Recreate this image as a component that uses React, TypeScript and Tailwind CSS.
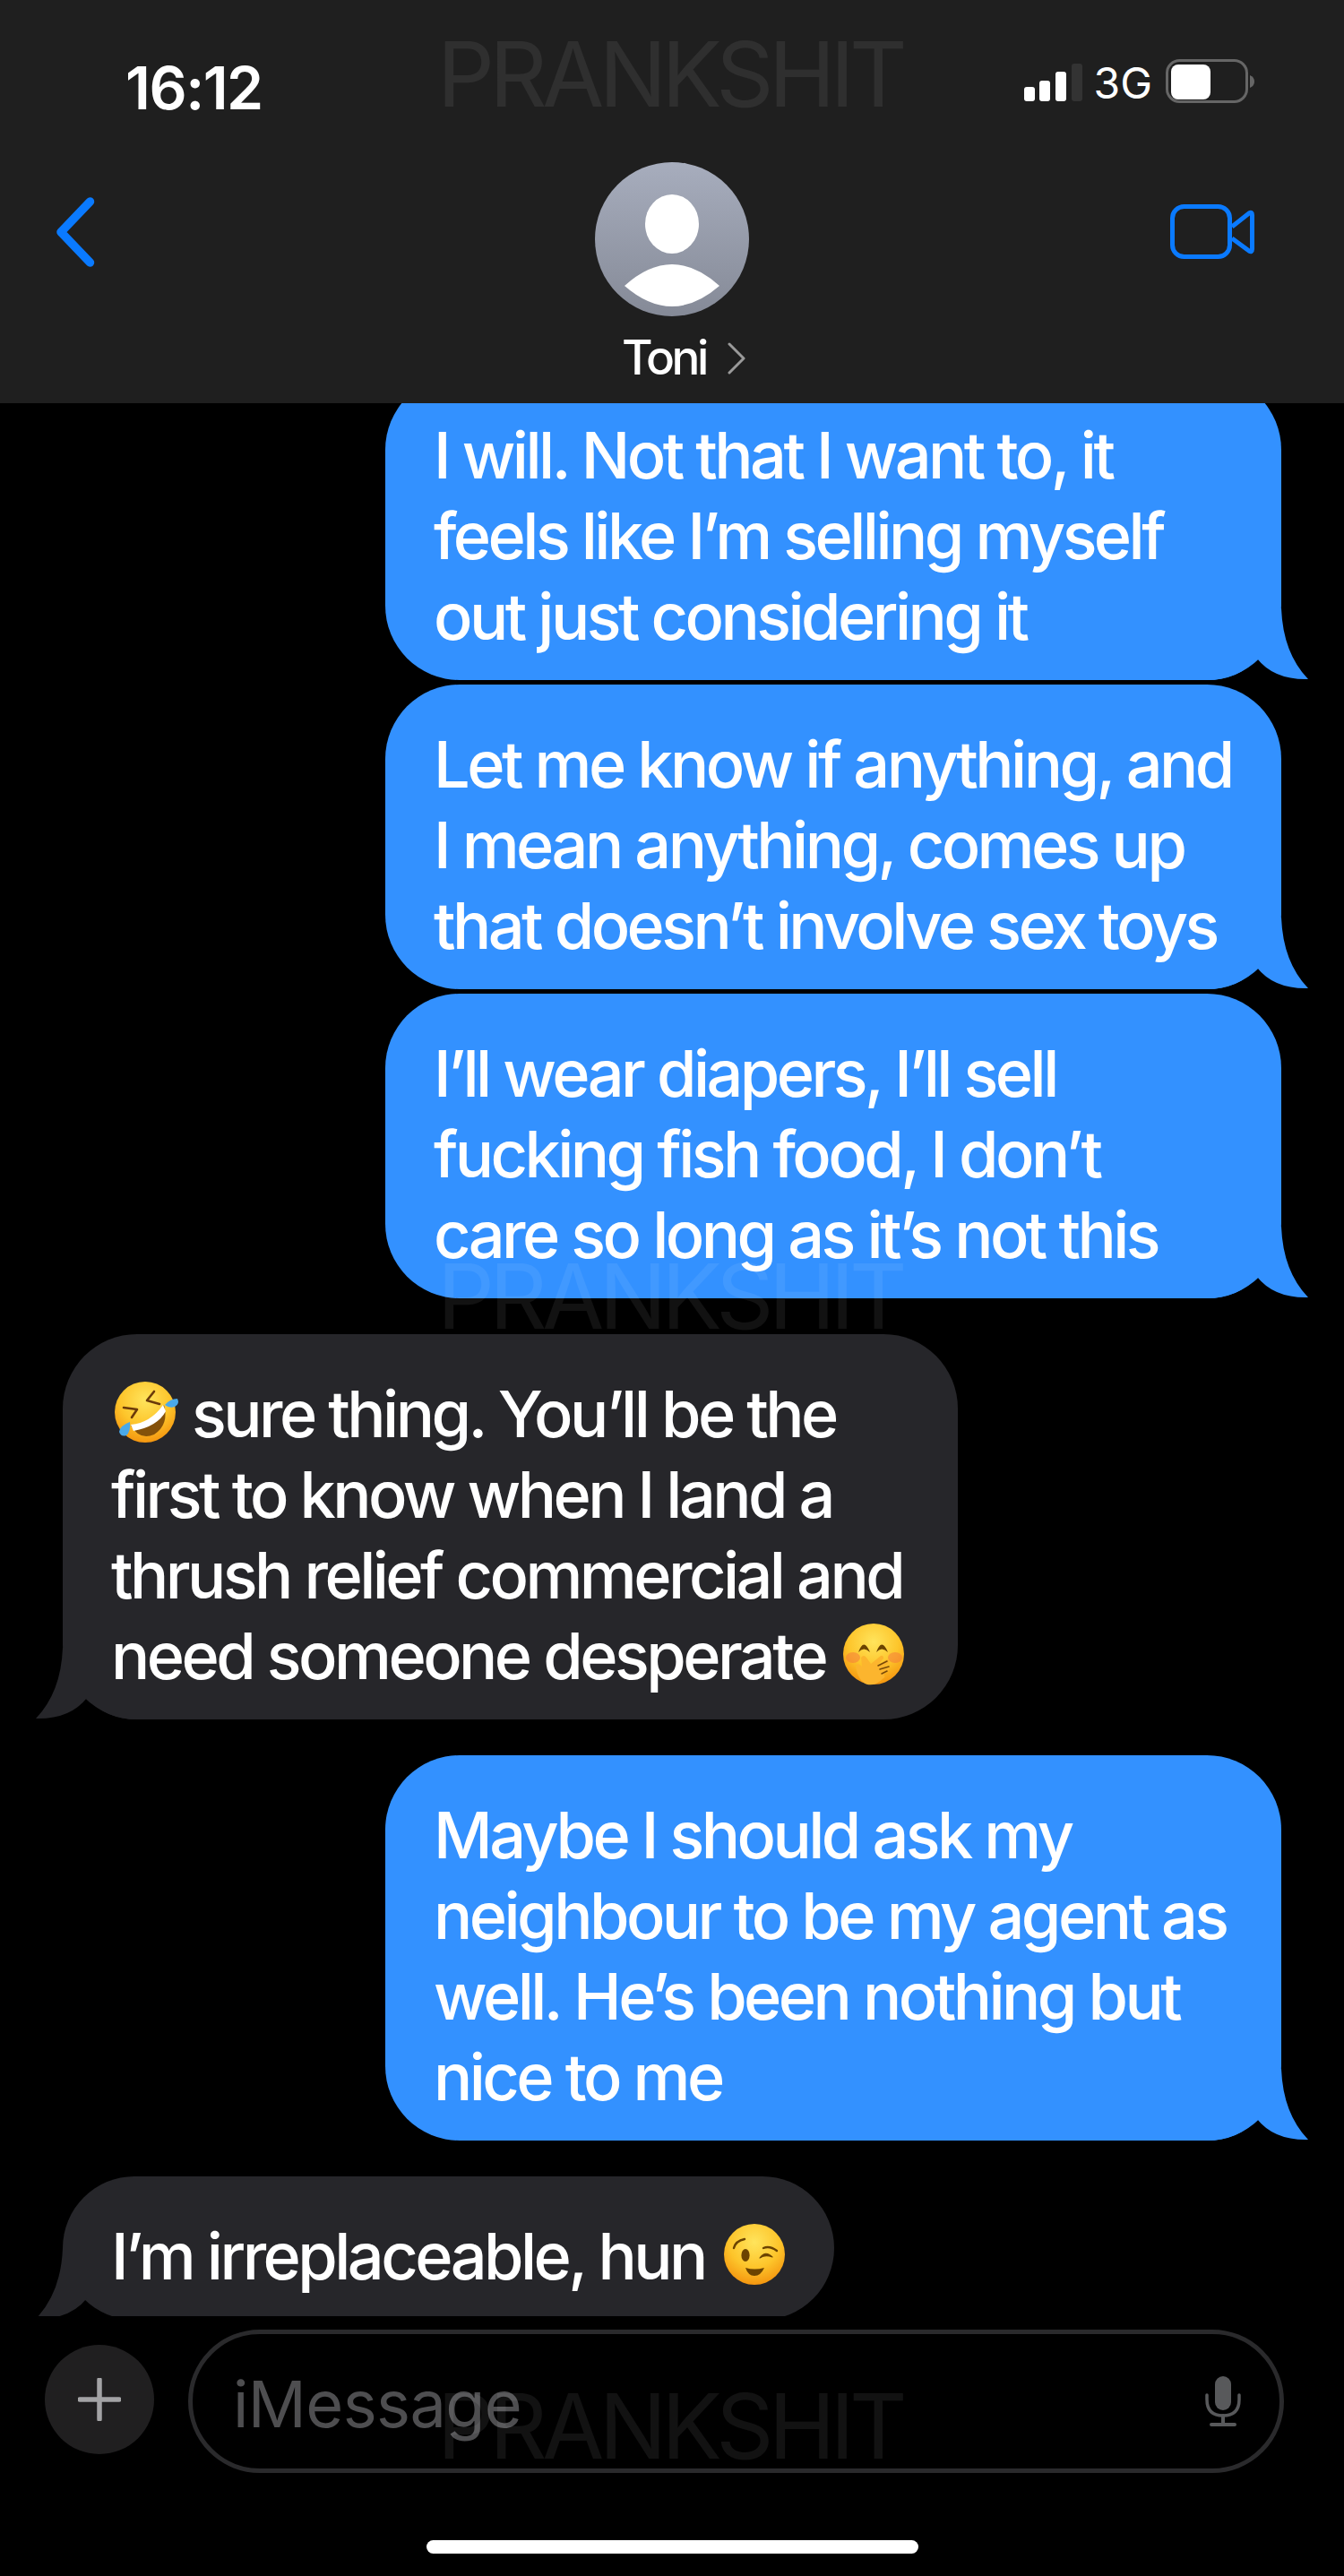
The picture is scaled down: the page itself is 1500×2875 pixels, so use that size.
import React from "react";

const font = { fontFamily: "Inter, 'Noto Sans', sans-serif" };

function Tail({ side, color }: { side: "left" | "right"; color: string }) {
  const cls =
    side === "right"
      ? "absolute bottom-0 right-[-30px] w-[120px] h-[80px]"
      : "absolute bottom-0 left-[-30px] w-[120px] h-[80px] -scale-x-100";
  return (
    <svg viewBox="0 0 120 80" className={cls}>
      <path d="M0 80 L7 80 Q42 80 63 56 Q82 80 120 79 Q92 50 90 0 L0 0Z" fill={color} />
    </svg>
  );
}

function Bubble({ side, width, lines }: { side: "left" | "right"; width: string; lines: React.ReactNode[] }) {
  const right = side === "right";
  return (
    <div
      className={
        right
          ? `relative self-end mr-[70px] ${width} rounded-[83px] bg-[#3391ff] pl-[54px] pt-[44px] pb-[26px] text-white`
          : `relative self-start ml-[70px] ${width} rounded-[83px] bg-[#26262a] pl-[54px] pt-[44px] pb-[26px] text-white`
      }
    >
      <Tail side={side} color={right ? "#3391ff" : "#26262a"} />
      <div className="relative">
        {lines.map((l, i) => (
          <div key={i} className="text-[72px] font-[450] leading-[90px] tracking-[-3.55px] whitespace-nowrap">
            {l}
          </div>
        ))}
      </div>
    </div>
  );
}

function FaceDefs({ id }: { id: string }) {
  return (
    <defs>
      <radialGradient id={id} cx="50%" cy="30%" r="75%">
        <stop offset="0%" stopColor="#ffe45c" />
        <stop offset="55%" stopColor="#fdc52b" />
        <stop offset="90%" stopColor="#f59a12" />
        <stop offset="100%" stopColor="#ee8a0c" />
      </radialGradient>
    </defs>
  );
}

function Rofl() {
  return (
    <svg viewBox="16 10 76 72" className="inline-block w-[76px] h-[72px] ml-[2px] mr-[12px] align-[-8px]">
      <FaceDefs id="rofl" />
      <circle cx="52" cy="46" r="34" fill="url(#rofl)" />
      <path d="M28 41 L43 43 L37 52" fill="none" stroke="#6b3a0a" strokeWidth="2.6" strokeLinejoin="round" strokeLinecap="round" />
      <path d="M62 23 L54 33 L68 37" fill="none" stroke="#6b3a0a" strokeWidth="2.6" strokeLinejoin="round" strokeLinecap="round" />
      <path d="M36 61 Q60 59 73 38 Q79 60 62 71 Q46 78 36 61Z" fill="#84510a" />
      <path d="M36 60 Q58 58 72 38 L75 45 Q66 62 39 67Z" fill="#ffffff" />
      <path d="M74 38 Q80 31 88 31 Q91 37 85 40 Q79 42 74 38Z" fill="#4aa9e9" />
      <path d="M35 57 Q24 61 23 68 Q25 74 31 72 Q36 68 35 57Z" fill="#4aa9e9" />
    </svg>
  );
}

function HandFace() {
  return (
    <svg viewBox="12 10 72 72" className="inline-block w-[72px] h-[72px] ml-[18px] align-[-8px]">
      <FaceDefs id="hand" />
      <circle cx="48" cy="46" r="34" fill="url(#hand)" />
      <ellipse cx="25" cy="50" rx="8" ry="6" fill="#f47c3c" opacity="0.55" />
      <ellipse cx="72" cy="50" rx="8" ry="6" fill="#f47c3c" opacity="0.55" />
      <path d="M31 44 Q37 27 44 44 Q37 37 31 44Z" fill="#6b4300" />
      <path d="M51 44 Q57 27 64 44 Q57 37 51 44Z" fill="#6b4300" />
      <path
        d="M34 50 Q37 46 40 50 L45 57 L56 48 Q59 47 59 51 L53 58 L63 52 Q66 52 65 56 L57 63 L64 60 Q67 61 65 64 L59 69 Q62 71 59 73 Q50 82 41 80 Q34 78 30 68 L28 60 Q29 56 32 58 L35 60Z"
        fill="#fcb52e"
      />
      <path d="M53 59 L63 54 M55 63 L65 60 M57 68 L63 65" stroke="#7a4a08" strokeWidth="1.6" strokeLinecap="round" fill="none" />
    </svg>
  );
}

function Wink() {
  return (
    <svg viewBox="12 10 72 72" className="inline-block w-[72px] h-[72px] ml-[19px] align-[-8px]">
      <FaceDefs id="wink" />
      <circle cx="48" cy="46" r="34" fill="url(#wink)" />
      <path d="M25 39 Q27 31 37 29" fill="none" stroke="#6b4300" strokeWidth="2.4" strokeLinecap="round" />
      <ellipse cx="38" cy="47" rx="4.6" ry="7" fill="#6b4300" />
      <path d="M58 39 Q65 36 73 42" fill="none" stroke="#6b4300" strokeWidth="2.4" strokeLinecap="round" />
      <path d="M54 50 Q60 41 68 49 Q60 46 54 50Z" fill="#6b4300" stroke="#6b4300" strokeWidth="1.2" strokeLinejoin="round" />
      <path d="M38 61 Q48 64 59 61 Q55 70 48 70 Q41 70 38 61Z" fill="#6b4300" />
    </svg>
  );
}

function Watermark({ top }: { top: string }) {
  return (
    <div
      className={`absolute left-[488px] ${top} text-[100px] leading-none tracking-[-5.5px] text-white/[0.07] whitespace-nowrap pointer-events-none`}
    >
      PRANKSHIT
    </div>
  );
}

export default function App() {
  return (
    <div className="relative w-[1500px] h-[2875px] bg-black overflow-hidden flex flex-col" style={font}>
      <header className="h-[450px] shrink-0 bg-[#1f1f1f] flex flex-col">
        <div className="h-[181px] flex items-center pl-[140px] pr-[100px] text-white">
          <span className="mt-[14px] text-[66px] leading-none font-semibold tracking-[-1.5px]">16:12</span>
          <div className="ml-auto flex items-center">
            <svg viewBox="0 0 65 42" className="w-[65px] h-[42px] mt-[3px]">
              <rect x="0" y="26" width="12" height="16" rx="3" fill="#fff" />
              <rect x="17" y="19" width="12" height="23" rx="3" fill="#fff" />
              <rect x="35" y="9" width="12" height="33" rx="3" fill="#fff" />
              <rect x="53" y="0" width="12" height="42" rx="3" fill="#333333" />
            </svg>
            <span className="ml-[13px] text-[48px] leading-none tracking-[0px] mt-[5px]">3G</span>
            <svg viewBox="0 0 99 49" className="ml-[15px] w-[99px] h-[49px]">
              <rect x="1.5" y="1.5" width="89" height="46" rx="14" fill="none" stroke="#666666" strokeWidth="3" />
              <rect x="6" y="6" width="44" height="39" rx="8" fill="#fff" />
              <path d="M94 18 Q99 20 99 25 Q99 30 94 32Z" fill="#666666" />
            </svg>
          </div>
        </div>
        <div className="grid grid-cols-[1fr_172px_1fr]">
          <div className="pl-[62px] pt-[39px]">
            <svg viewBox="0 0 44 78" className="w-[44px] h-[78px]">
              <path d="M38.500 5 L6 39 L38.500 73" fill="none" stroke="#0a7aff" strokeWidth="9.500" strokeLinecap="round" strokeLinejoin="round" />
            </svg>
          </div>
          <div className="flex flex-col items-center">
            <svg viewBox="0 0 172 172" className="w-[172px] h-[172px]">
              <defs>
                <linearGradient id="av" x1="0" y1="0" x2="0" y2="1">
                  <stop offset="0%" stopColor="#a7adbd" />
                  <stop offset="100%" stopColor="#858a97" />
                </linearGradient>
              </defs>
              <circle cx="86" cy="86" r="86" fill="url(#av)" />
              <ellipse cx="86" cy="69" rx="30" ry="33" fill="#fff" />
              <path d="M33 138 Q86 90 139 138 Q86 184 33 138Z" fill="#fff" />
            </svg>
            <div className="mt-[14px] ml-[26px] flex items-center text-white whitespace-nowrap">
              <span className="text-[53px] font-[450] leading-[64px] tracking-[-3.4px]">Toni</span>
              <svg viewBox="0 0 20 36" className="ml-[24px] w-[20px] h-[36px] mt-[2px]">
                <path d="M2 2 L18 18 L2 34" fill="none" stroke="#9a9a9a" strokeWidth="3" strokeLinecap="round" strokeLinejoin="round" />
              </svg>
            </div>
          </div>
          <div className="flex justify-end pr-[100px] pt-[47px]">
            <svg viewBox="0 0 94 61" className="w-[94px] h-[61px]">
              <rect x="2.5" y="2.5" width="64" height="56" rx="13" fill="none" stroke="#0a7aff" strokeWidth="5" />
              <path d="M69 25 L88 10 Q91.500 8 91.500 12 L91.500 50 Q91.500 54 88 52 L69 38" fill="none" stroke="#0a7aff" strokeWidth="5" strokeLinejoin="round" />
            </svg>
          </div>
        </div>
      </header>

      <main className="h-[2135px] shrink-0 overflow-hidden flex flex-col">
        <div className="-mt-[31px] flex flex-col">
          <Bubble side="right" width="w-[1000px]" lines={["I will. Not that I want to, it", "feels like I’m selling myself", "out just considering it"]} />
          <div className="mt-[5px] flex flex-col">
            <Bubble side="right" width="w-[1000px]" lines={["Let me know if anything, and", "I mean anything, comes up", "that doesn’t involve sex toys"]} />
          </div>
          <div className="mt-[5px] flex flex-col">
            <Bubble side="right" width="w-[1000px]" lines={["I’ll wear diapers, I’ll sell", "fucking fish food, I don’t", "care so long as it’s not this"]} />
          </div>
          <div className="mt-[40px] flex flex-col">
            <Bubble
              side="left"
              width="w-[999px]"
              lines={[
                <>
                  <Rofl />
                  sure thing. You’ll be the
                </>,
                "first to know when I land a",
                "thrush relief commercial and",
                <>
                  need someone desperate
                  <HandFace />
                </>,
              ]}
            />
          </div>
          <div className="mt-[40px] flex flex-col">
            <Bubble side="right" width="w-[1000px]" lines={["Maybe I should ask my", "neighbour to be my agent as", "well. He’s been nothing but", "nice to me"]} />
          </div>
          <div className="mt-[40px] flex flex-col">
            <Bubble
              side="left"
              width="w-[861px]"
              lines={[
                <>
                  I’m irreplaceable, hun
                  <Wink />
                </>,
              ]}
            />
          </div>
        </div>
      </main>

      <footer className="flex-1 flex flex-col pt-[15px]">
        <div className="flex items-center pl-[50px] gap-[38px]">
          <div className="w-[122px] h-[122px] rounded-full bg-[#201f20] flex items-center justify-center -mt-[4px]">
            <svg viewBox="0 0 48 48" className="w-[48px] h-[48px]">
              <path d="M24 2 V46 M2 24 H46" stroke="#a3a3a5" strokeWidth="5.500" strokeLinecap="round" fill="none" />
            </svg>
          </div>
          <div className="w-[1223px] h-[160px] rounded-[80px] border-[5px] border-[#2a2a2c] flex items-center pl-[45px] pr-[43px]">
            <span className="text-[72px] leading-[90px] tracking-[-0.6px] text-[#4e4e50] mt-[6px]">iMessage</span>
            <svg viewBox="0 0 40 56" className="ml-auto w-[40px] h-[56px]">
              <rect x="11" y="0" width="18" height="38" rx="9" fill="#58595b" />
              <path d="M2 21 V26 Q2 44 20 44 Q38 44 38 26 V21" fill="none" stroke="#58595b" strokeWidth="3.500" strokeLinecap="round" />
              <path d="M20 44 V53 M7 54 H33" stroke="#58595b" strokeWidth="4" strokeLinecap="round" fill="none" />
            </svg>
          </div>
        </div>
        <div className="mt-[75px] ml-[476px] w-[549px] h-[15px] rounded-full bg-white" />
      </footer>

      <Watermark top="top-[33px]" />
      <Watermark top="top-[1397px]" />
      <Watermark top="top-[2658px]" />
    </div>
  );
}
